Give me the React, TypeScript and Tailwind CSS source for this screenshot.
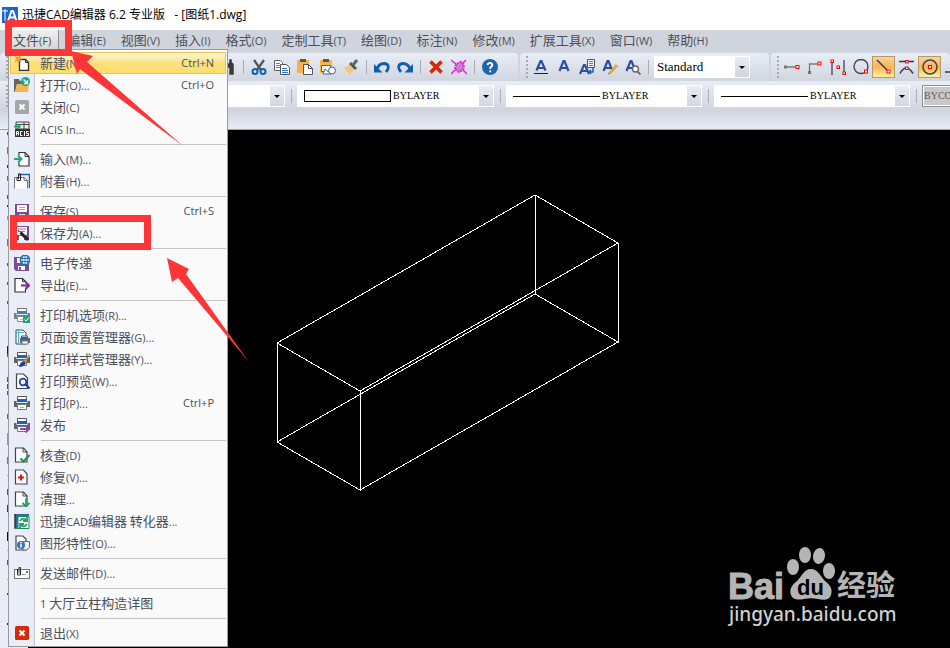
import React from "react";

type IconProps = { name: string };

function Printer() {
  return (
    <g>
      <path d="M3.5 1.5h9v4h-9z" fill="#fff" stroke="#555" />
      <rect x="3" y="4" width="10" height="3" fill="#1565c0" />
      <path d="M0 6h2.500v2h11V6H16v6h-3V9.500H3V12H0z" fill="#5f6368" />
      <path d="M3.500 9.500h9v5h-9z" fill="#fff" stroke="#777" />
      <path d="M6 12.500h4" stroke="#8ab4e8" />
    </g>
  );
}

function Icon({ name }: IconProps) {
  const shapes: Record<string, React.ReactNode> = {
    new: (
      <>
        <path d="M5.500 4.500h6l3 3v8h-9z" fill="#fff" stroke="#333" strokeWidth="1.300" />
        <path d="M11.500 4.500v3h3" fill="none" stroke="#333" />
        <path d="M4 0v8M0 4h8M1 1l6 6M7 1L1 7" stroke="#f0a030" strokeWidth="1.200" />
      </>
    ),
    open: (
      <>
        <path d="M0 2h5l1 2h4v3H3L1 15H0z" fill="#666" />
        <path d="M3 7h12l-1 8H1.500z" fill="#fbb34c" />
        <circle cx="11.500" cy="4.500" r="4.500" fill="#22a57c" />
        <path d="M9.500 2.500l4 4m0-3.500v3.500H10" fill="none" stroke="#fff" strokeWidth="1.300" />
      </>
    ),
    close: (
      <>
        <rect x="1" y="1" width="14" height="14" rx="1.500" fill="#a6a6a6" />
        <path d="M5.500 5.500l5 5m0-5l-5 5" stroke="#fff" strokeWidth="2" />
      </>
    ),
    acis: (
      <>
        <path d="M2 1h13v7H2zM10 1v7M2 3.500h13" fill="#eee" stroke="#444" />
        <path d="M0 5.500h5M3 3l3 2.500L3 8" fill="none" stroke="#22a06b" strokeWidth="1.500" />
        <rect x="1" y="8" width="15" height="8" fill="#333" />
        <path d="M2.500 14.500v-4h2v4m-2-2h2M8.500 10.500h-2v4h2M10.500 10v5M14.500 10.500h-2v2h2v2h-2.500" fill="none" stroke="#fff" />
      </>
    ),
    import: (
      <>
        <path d="M5 4V1.500h6l4 4v9.500H5v-3" fill="#fff" stroke="#333" strokeWidth="1.200" />
        <path d="M11 1.500v4h4" fill="none" stroke="#333" />
        <path d="M0 8h7M4 4.500L7.500 8 4 11.500" fill="none" stroke="#22a878" strokeWidth="2" />
      </>
    ),
    attach: (
      <>
        <path d="M4 1.500h11.500V15" fill="none" stroke="#1b6aa5" strokeWidth="1.500" />
        <path d="M.5 15.500v-11h10l3 3v8" fill="#fff" stroke="#777" />
        <path d="M10 4.500v3h4" fill="none" stroke="#777" />
        <path d="M3 4v3.500h3.500V1H4.500v5" fill="none" stroke="#222" />
      </>
    ),
    save: (
      <>
        <path d="M1 1h14v14H3l-2-2z" fill="#7b4b94" />
        <rect x="3" y="2" width="10" height="7" fill="#fff" />
        <path d="M5 4.500h6M5 6.500h6" stroke="#aaa" />
        <rect x="5" y="11" width="6" height="4" fill="#ddd" />
      </>
    ),
    saveas: (
      <>
        <path d="M1 1h14v14H3l-2-2z" fill="#7b4b94" />
        <rect x="3" y="2" width="10" height="8" fill="#fff" />
        <path d="M4 4h8" stroke="#c86464" />
        <path d="M4 6.500h7" stroke="#888" />
        <rect x="5" y="11" width="5" height="4" fill="#fff" />
        <path d="M6.500 7.500l7.500 7.500" stroke="#222" strokeWidth="3" />
        <path d="M4 5l2.500 2.500" stroke="#555" />
      </>
    ),
    send: (
      <>
        <path d="M0 2h15v14H2l-2-2z" fill="#7b4b94" />
        <rect x="3" y="3" width="8" height="5" fill="#fff" />
        <rect x="4" y="11" width="7" height="4" fill="#fff" />
        <rect x="5" y="12" width="2" height="3" fill="#7b4b94" />
        <circle cx="11" cy="5" r="4.800" fill="#e4f2ff" stroke="#1764a8" strokeWidth="1.200" />
        <path d="M6.500 3.500h9M6.500 6.500h9M11 0v10M9 .8q-2 4 0 8.500M13 .8q2 4 0 8.500" fill="none" stroke="#1764a8" strokeWidth=".8" />
      </>
    ),
    export: (
      <>
        <path d="M11.500 5V4.500l-3-3H1v13.500h10.500v-3" fill="#fff" stroke="#333" strokeWidth="1.200" />
        <path d="M8.500 1.500v3h3" fill="none" stroke="#333" />
        <path d="M7 8.500h8M11.500 5L15 8.500 11.500 12" fill="none" stroke="#7a28a8" strokeWidth="2" />
      </>
    ),
    printcheck: (
      <>
        <g opacity=".8"><Printer /></g>
        <rect x="9" y="9" width="7" height="7" fill="#2f9e6e" />
        <path d="M10.500 12.500l1.500 1.500 3-3.500" fill="none" stroke="#fff" />
      </>
    ),
    pagesetup: (
      <>
        <path d="M2 1h7l3 3v11H2z" fill="#fff" stroke="#444" />
        <path d="M4.500 1v14M2 3.500h8" stroke="#45b8dc" />
        <path d="M7.500 7h6v4h-6z" fill="#fff" stroke="#555" />
        <path d="M6 9h10v5H6z" fill="#5f6368" />
        <rect x="8" y="8" width="5" height="2" fill="#1565c0" />
        <rect x="8" y="12" width="6" height="3" fill="#fff" stroke="#777" />
      </>
    ),
    printstyle: (
      <>
        <Printer />
        <path d="M15.500 4L10 11" stroke="#d09022" strokeWidth="2" />
        <path d="M5 16q1-5 5-6l2 2q-2 4-7 4" fill="#173f93" />
      </>
    ),
    preview: (
      <>
        <path d="M2.500 1h7l4 4v10.500h-11z" fill="#fff" stroke="#444" strokeWidth="1.200" />
        <circle cx="9" cy="9" r="3.300" fill="#eef5ff" stroke="#1b3fa0" strokeWidth="1.700" />
        <path d="M11.500 11.500L15.500 15.500" stroke="#1b3fa0" strokeWidth="2" />
      </>
    ),
    print: <Printer />,
    publish: (
      <>
        <Printer />
        <path d="M6 12h9M11.500 8.500L15 12l-3.500 3.500" fill="none" stroke="#8b48ad" strokeWidth="2" />
      </>
    ),
    audit: (
      <>
        <path d="M1.500 1h8l3.500 4v10H1.500z" fill="#fff" stroke="#444" strokeWidth="1.200" />
        <path d="M9 1v4h4" fill="none" stroke="#444" />
        <path d="M6.500 11.500l3 3 6-6.500" fill="none" stroke="#119447" strokeWidth="2" />
      </>
    ),
    repair: (
      <>
        <path d="M1.500 1h8l3.500 4v10H1.500z" fill="#fff" stroke="#444" strokeWidth="1.200" />
        <path d="M7 5.500v6M4 8.500h6" stroke="#f20f0f" strokeWidth="2" />
      </>
    ),
    purge: (
      <>
        <path d="M1.500 1h8l3.500 4v10H1.500z" fill="#fff" stroke="#444" strokeWidth="1.200" />
        <path d="M9 1v4h4" fill="none" stroke="#444" />
        <path d="M12 7.500v8M8.500 12l3.500 3.500L15.500 12" fill="none" stroke="#2b9e68" strokeWidth="1.800" />
      </>
    ),
    convert: (
      <>
        <path d="M1 1h14v13H1z" fill="#2a6ca8" />
        <path d="M1 1v14h3" fill="none" stroke="#333" strokeWidth="1.500" />
        <path d="M4 3.500h11v12H4z" fill="#fff" stroke="#22885c" />
        <path d="M6 8q3-4 6-1m1-3v4H9M13 11q-3 4-6 1m-1 3v-4h4" fill="none" stroke="#18a566" strokeWidth="1.800" />
      </>
    ),
    props: (
      <>
        <path d="M2 1h7l3 3v11H2z" fill="#fff" stroke="#444" strokeWidth="1.200" />
        <path d="M9 6.500h6.500v6l-3 2.500H9z" fill="#eee" stroke="#666" />
        <circle cx="7" cy="10" r="4" fill="#3676ba" />
        <path d="M7 7v1.500M7 9v3.500" stroke="#fff" strokeWidth="1.500" />
      </>
    ),
    mail: (
      <>
        <rect x=".5" y="4.500" width="15" height="9" fill="#fff" stroke="#777" />
        <path d="M3.500 4v6h3V2.500H5v6" fill="none" stroke="#333" />
        <path d="M8 9.500h4" stroke="#999" />
        <rect x="12" y="6" width="2" height="2" fill="#3676ba" />
      </>
    ),
    exit: (
      <>
        <rect x="1" y="1" width="14" height="14" rx="1.500" fill="#d8280b" />
        <path d="M5.500 5.500l5 5m0-5l-5 5" stroke="#fff" strokeWidth="2" />
      </>
    ),
    find: (
      <path d="M4 1h2v3h3V0h3v3l2 2v11H9V9H7v6H1V7l3-3z" fill="#3a3a3a" stroke="#ddd" strokeWidth=".5" />
    ),
    cut: (
      <>
        <path d="M3 1l7 10M13 1L6 11" stroke="#555" strokeWidth="2.200" />
        <circle cx="4" cy="12.500" r="2.500" fill="none" stroke="#0f62ae" strokeWidth="2" />
        <circle cx="12" cy="12.500" r="2.500" fill="none" stroke="#0f62ae" strokeWidth="2" />
      </>
    ),
    copy: (
      <>
        <path d="M.5 1.500h6l2 2v8h-8z" fill="#fff" stroke="#666" />
        <path d="M2 4.500h4M2 6.500h5M2 8.500h4" stroke="#4c87c5" />
        <path d="M6.500 5.500h6l3 3v7h-9z" fill="#fff" stroke="#555" />
        <path d="M8 9.500h5M8 11.500h6M8 13.500h6" stroke="#2f78c4" />
      </>
    ),
    paste: (
      <>
        <path d="M0 1h12v13H0z" fill="#f9b24a" />
        <path d="M3 0h6v3H3z" fill="#555" />
        <path d="M6.500 5.500h5l4 4v6h-9z" fill="#fff" stroke="#555" />
        <path d="M11.500 5.500v4h4" fill="none" stroke="#555" />
      </>
    ),
    pastespecial: (
      <>
        <path d="M0 1h12v13H0z" fill="#f9b24a" />
        <path d="M3 0h6v3H3z" fill="#555" />
        <path d="M1.500 6.500h9v6h-9z" fill="#fff" stroke="#45658d" />
        <circle cx="12" cy="11.500" r="3.500" fill="#f4f4f4" stroke="#45658d" />
        <path d="M5 10l-2 5h8z" fill="#fff" stroke="#45658d" />
      </>
    ),
    brush: (
      <>
        <path d="M1 9l6-3 4 4-4 6z" fill="#efc581" />
        <path d="M6 5l6 6 2-2-6-6z" fill="#555" />
        <path d="M10 6l4-5" stroke="#666" strokeWidth="3" />
      </>
    ),
    undo: (
      <>
        <path d="M3 10Q5 4.500 10 4.500c4.500 0 6 4 2 8.500" fill="none" stroke="#0f5fb0" strokeWidth="2.800" />
        <path d="M0 5v8.500h8.500z" fill="#0f5fb0" />
      </>
    ),
    redo: (
      <>
        <path d="M13 10Q11 4.500 6 4.500c-4.500 0-6 4-2 8.500" fill="none" stroke="#0f5fb0" strokeWidth="2.800" />
        <path d="M16 5v8.500H7.500z" fill="#0f5fb0" />
      </>
    ),
    delete: <path d="M2.500 2.500l11 11m0-11l-11 11" stroke="#dc2400" strokeWidth="3.600" />,
    erase: (
      <>
        <path d="M0 1l5 4M15 1l-4 4M0 15l4-4M16 15l-4-4" stroke="#f01ae0" strokeWidth="1.500" />
        <path d="M4 10l1-5 5-2 3 3-1 5-4 2z" fill="#b58bbb" stroke="#f01ae0" strokeWidth="2" strokeDasharray="2 1" />
      </>
    ),
    help: (
      <>
        <circle cx="8" cy="8" r="8" fill="#1b67ab" />
        <path d="M5.500 6Q6 3.500 8.500 4q2.500.8 1.500 3L8.300 8.500v1.500M8.300 11.300v2" fill="none" stroke="#fff" strokeWidth="1.900" />
      </>
    ),
    textUnderline: (
      <>
        <path d="M3.500 11.500L7.500 2h1l4 9.500M5 9h6" fill="none" stroke="#2b509c" strokeWidth="2.200" />
        <path d="M1 14.500h14" stroke="#222" />
      </>
    ),
    text: <path d="M3.500 12L7.500 2h1l4 10M5 9h6" fill="none" stroke="#2b509c" strokeWidth="2.200" />,
    textImport: (
      <>
        <path d="M1 15L5 6h1l4 9M3 12h5" fill="none" stroke="#2b509c" strokeWidth="2.200" />
        <path d="M8.500.5h7v8h-7z" fill="#fff" stroke="#555" />
        <path d="M10 2.500h4M10 4.500h4M10 6.500h4" stroke="#777" />
        <path d="M14 8v5h-3m1-2l-2 2 2 2" fill="none" stroke="#1367b5" strokeWidth="1.500" />
      </>
    ),
    textEdit: (
      <>
        <path d="M1.500 12L5.500 2h1l4 10M3 9h6" fill="none" stroke="#2b509c" strokeWidth="2.200" />
        <path d="M15 6l-7 8" stroke="#e9a83f" strokeWidth="3" />
        <path d="M7 13l-1 2.500 2.500-1z" fill="#777" />
      </>
    ),
    textFind: (
      <>
        <path d="M1.500 12L5.500 2h1l4 10M3 9h6" fill="none" stroke="#2b509c" strokeWidth="2.200" />
        <circle cx="10.500" cy="10" r="3" fill="#fff" stroke="#666" strokeWidth="1.400" />
        <path d="M12.500 12.500l3 3" stroke="#666" strokeWidth="1.800" />
      </>
    ),
    snapTrack: (
      <>
        <path d="M2 8h11" stroke="#777" strokeWidth="1.300" />
        <rect x="0" y="6.500" width="3" height="3" fill="#777" />
        <rect x="12" y="6.500" width="3" height="3" fill="#fff" stroke="#f00" />
      </>
    ),
    snapFrom: (
      <>
        <path d="M2.500 14V5h9" fill="none" stroke="#777" strokeWidth="1.300" />
        <rect x="1" y="12" width="3" height="3" fill="#777" />
        <rect x="11" y="3" width="3" height="3" fill="#fff" stroke="#f00" />
      </>
    ),
    snapMid: (
      <>
        <path d="M2 3v13M14 1v13" stroke="#2a3b58" strokeWidth="1.200" />
        <g fill="#fff" stroke="#f00">
          <rect x="1" y="1" width="2.500" height="2.500" />
          <rect x="7" y="7" width="2.500" height="2.500" />
          <rect x="13" y="13" width="2.500" height="2.500" />
        </g>
      </>
    ),
    snapQuad: (
      <>
        <circle cx="8" cy="7.500" r="7" fill="none" stroke="#3c4454" strokeWidth="1.400" />
        <rect x="11.500" y="11" width="3" height="3" fill="#fff" stroke="#f00" />
      </>
    ),
    snapEnd: (
      <>
        <path d="M1 1l12 12" stroke="#2a3b58" strokeWidth="1.400" />
        <rect x="11" y="11" width="3" height="3" fill="#fff" stroke="#f00" />
      </>
    ),
    snapCross: (
      <>
        <path d="M0 2.500h15M1 14.500q6-11 13 0" fill="none" stroke="#2a3b58" strokeWidth="1.400" />
        <rect x="6.500" y="1.500" width="2.500" height="2.500" fill="#fff" stroke="#f00" />
        <rect x="6.500" y="8" width="2.500" height="2.500" fill="#fff" stroke="#f00" />
      </>
    ),
    snapCenter: (
      <>
        <circle cx="8" cy="8" r="7" fill="none" stroke="#3c4454" strokeWidth="1.600" />
        <rect x="6.500" y="6.500" width="3" height="3" fill="#fff" stroke="#f00" />
      </>
    ),
    snapPerp: <path d="M0 13h15M8 1v12" fill="none" stroke="#2a3b58" strokeWidth="1.400" />,
  };
  return (
    <svg viewBox="0 0 16 16" className="h-4 w-4 shrink-0" aria-hidden="true">
      {shapes[name]}
    </svg>
  );
}

/* Chinese runs at 13px, Latin runs at 11px */
function Mixed({ text }: { text: string }) {
  const runs = text.split(/([\x20-\x7e]+)/).filter(Boolean);
  return (
    <>
      {runs.map((run, i) =>
        /[\x20-\x7e]/.test(run) ? (
          <span key={i} className="text-[11px]">{run}</span>
        ) : (
          <span key={i}>{run}</span>
        )
      )}
    </>
  );
}

type Item = { icon?: string; label: string; keys?: string; active?: boolean };

const fileMenu: Item[][] = [
  [
    { icon: "new", label: "新建(N)...", keys: "Ctrl+N", active: true },
    { icon: "open", label: "打开(O)...", keys: "Ctrl+O" },
    { icon: "close", label: "关闭(C)" },
    { icon: "acis", label: "ACIS In..." },
  ],
  [
    { icon: "import", label: "输入(M)..." },
    { icon: "attach", label: "附着(H)..." },
  ],
  [
    { icon: "save", label: "保存(S)", keys: "Ctrl+S" },
    { icon: "saveas", label: "保存为(A)..." },
  ],
  [
    { icon: "send", label: "电子传递" },
    { icon: "export", label: "导出(E)..." },
  ],
  [
    { icon: "printcheck", label: "打印机选项(R)..." },
    { icon: "pagesetup", label: "页面设置管理器(G)..." },
    { icon: "printstyle", label: "打印样式管理器(Y)..." },
    { icon: "preview", label: "打印预览(W)..." },
    { icon: "print", label: "打印(P)...", keys: "Ctrl+P" },
    { icon: "publish", label: "发布" },
  ],
  [
    { icon: "audit", label: "核查(D)" },
    { icon: "repair", label: "修复(V)..." },
    { icon: "purge", label: "清理..." },
    { icon: "convert", label: "迅捷CAD编辑器 转化器..." },
    { icon: "props", label: "图形特性(O)..." },
  ],
  [{ icon: "mail", label: "发送邮件(D)..." }],
  [{ label: "1 大厅立柱构造详图" }],
  [{ icon: "exit", label: "退出(X)" }],
];

const menus = [
  "编辑(E)", "视图(V)", "插入(I)", "格式(O)", "定制工具(T)", "绘图(D)",
  "标注(N)", "修改(M)", "扩展工具(X)", "窗口(W)", "帮助(H)",
];

function FileMenu() {
  return (
    <div
      role="menu"
      className="absolute top-full left-0.5 z-20 -mt-px w-[220px] border border-[#9a9a9a] bg-[linear-gradient(to_right,#e9edf7_25px,#c4c6ca_25px,#c4c6ca_26px,#fafafa_26px)] px-px pt-0.5 pb-0.5"
    >
      {fileMenu.map((group, g) => (
        <div key={g}>
          {g > 0 && (
            <div className="flex h-2 items-center pl-[31px]">
              <div className="h-px w-full bg-[#c3c3c3]" />
            </div>
          )}
          {group.map((item) => (
            <button
              key={item.label}
              role="menuitem"
              className={
                "flex h-[22px] w-full items-center border pr-[11px] pl-[3px] text-left " +
                (item.active
                  ? "border-[#e8c552] bg-linear-to-b from-[#fdf6dc] via-[#fbe07c] to-[#ffdf6a]"
                  : "border-transparent")
              }
            >
              <span className="flex w-[26px] shrink-0">{item.icon && <Icon name={item.icon} />}</span>
              <span className="flex-1 whitespace-nowrap"><Mixed text={item.label} /></span>
              {item.keys && <span className="text-[11px]">{item.keys}</span>}
            </button>
          ))}
        </div>
      ))}
    </div>
  );
}

function Tool({ name, on }: { name: string; on?: boolean }) {
  return (
    <button
      aria-label={name}
      className={
        "flex h-[22px] w-[23px] shrink-0 items-center justify-center " +
        (on ? "border border-[#b39a6c] bg-linear-to-b from-[#fbd09a] via-[#fdb550] to-[#fff3a0]" : "")
      }
    >
      <Icon name={name} />
    </button>
  );
}

function Sep() {
  return (
    <div className="flex h-[14px] w-2 shrink-0 justify-center">
      <div className="h-full w-px bg-[#a5abb8]" />
    </div>
  );
}

function Grip() {
  return (
    <div className="flex h-[22px] w-[9px] shrink-0 flex-col justify-between pl-1.5">
      {[0, 1, 2, 3, 4, 5].map((n) => (
        <i key={n} className="block h-0.5 w-0.5 bg-[#a3a9b5]" />
      ))}
    </div>
  );
}

function Combo({ label, value, width, swatch }: { label: string; value: string; width: string; swatch?: "box" | "line" }) {
  return (
    <div className={"relative h-[22px] shrink-0 bg-white " + width}>
      <select
        aria-label={label}
        defaultValue={value}
        className={
          "block h-[22px] w-full appearance-none bg-transparent pr-4 font-['Liberation_Serif',serif] text-black outline-none " +
          (swatch ? "pl-24 text-[10px]" : "pl-[3px] text-[13px]")
        }
      >
        <option>{value}</option>
      </select>
      {swatch === "box" && <span className="absolute top-[5px] left-[7px] h-3 w-[87px] border border-black" />}
      {swatch === "line" && <span className="absolute top-[11px] left-[7px] h-px w-[87px] bg-black" />}
      <span className="pointer-events-none absolute top-px right-px flex h-5 w-3.5 items-center justify-center bg-linear-to-b from-[#e9edf5] to-[#d0d5df]">
        <i className="block border-x-[3px] border-t-[3px] border-x-transparent border-t-black" />
      </span>
    </div>
  );
}

function Bar({ children, className }: { children: React.ReactNode; className: string }) {
  return (
    <div className={"flex h-7 shrink-0 items-center rounded-t-sm bg-linear-to-b from-[#e9edf6] to-[#d0d5df] " + className}>
      {children}
    </div>
  );
}

/* Edges of the drawing tools that stick out beside the open menu */
const toolMarks: [number, number, string][] = [
  [2, 3, "#24508c"], [17, 7, "#778"], [35, 3, "#334"], [46, 5, "#668"], [65, 4, "#2862a8"],
  [75, 2, "#334"], [86, 4, "#999"], [109, 7, "#778"], [133, 3, "#2862a8"], [152, 3, "#2862a8"],
  [171, 3, "#2862a8"], [188, 1, "#aaa"], [216, 10, "#222"], [224, 3, "#2862a8"], [247, 5, "#555"],
  [254, 5, "#555"], [261, 4, "#555"], [284, 5, "#667"], [303, 12, "#89a"], [327, 7, "#778"],
  [345, 1, "#aaa"], [359, 6, "#556"], [375, 7, "#246"], [402, 9, "#111"], [420, 1, "#aaa"],
  [430, 5, "#2862a8"], [449, 1, "#aaa"], [463, 2, "#444"], [493, 2, "#222"],
];

function SideBar() {
  return (
    <aside className="w-7 shrink-0 bg-[#e9edf7]">
      <svg className="h-full w-full" aria-hidden="true">
        {toolMarks.map(([y, h, fill]) => (
          <rect key={y} x="7" y={y} width="1" height={h} fill={fill} />
        ))}
      </svg>
    </aside>
  );
}

function Watermark() {
  return (
    <svg className="absolute right-[46px] bottom-4 h-[90px] w-[180px]" aria-label="Baidu 经验">
      <g fill="#b5b5b5">
        <text x="4" y="57" stroke="#b5b5b5" className="font-['Liberation_Sans',sans-serif] text-[36px] font-bold">Bai</text>
        <ellipse cx="69" cy="25" rx="6" ry="8" />
        <ellipse cx="81" cy="13" rx="6" ry="8" />
        <ellipse cx="95" cy="14" rx="6" ry="8" transform="rotate(10 95 14)" />
        <ellipse cx="105" cy="29" rx="6" ry="8" />
        <path d="M87 27c7 0 9 7 14 12 5 4 8 8 6 14-2 6-8 5-13 4-5-1-9-1-14 0-6 1-11 1-13-4-2-6 1-10 6-14 5-5 7-12 14-12z" />
        <text x="113" y="54" className="font-['Noto_Sans_CJK_SC',sans-serif] text-[29px] font-bold">经验</text>
      </g>
      <text x="73" y="53" fill="#000" className="font-['Liberation_Sans',sans-serif] text-[22px] font-bold">du</text>
      <text x="5" y="79" fill="#d0d0d0" className="font-['Noto_Sans',sans-serif] text-[19px] font-medium">jingyan.baidu.com</text>
    </svg>
  );
}

function Canvas() {
  return (
    <main className="relative min-w-0 flex-1 bg-black">
      <svg className="absolute inset-0 h-full w-full" aria-label="长方体线框">
        <path
          d="M507 65L590 113V212L507 164zM249 213L332 261V360L249 312zM249 213L507 65M332 261L590 113M332 360L590 212M249 312L507 164"
          fill="none"
          stroke="#fff"
          shapeRendering="crispEdges"
        />
      </svg>
      <Watermark />
    </main>
  );
}

/* Callouts drawn on top of the window */
function Callouts() {
  return (
    <div className="pointer-events-none absolute inset-0 z-30">
      <div className="absolute top-5 left-[5px] h-9 w-[67px] border-[7px] border-[#fc3636]" />
      <div className="absolute top-[215px] left-2.5 h-[35px] w-[141px] border-[7px] border-[#fc3636]" />
      <svg className="absolute inset-0 h-full w-full" aria-hidden="true">
        <path d="M71 51L93 56 87 62 183 146 80 69 77 74z" fill="#fc3636" />
        <path d="M167 258L189 269 186 274 249 362 178 278 172 282z" fill="#fc3636" />
      </svg>
    </div>
  );
}

export default function App() {
  return (
    <div className="relative flex h-screen flex-col overflow-hidden bg-[#d0d4dd] font-['Open_Sans','Noto_Sans_CJK_SC',sans-serif] text-[13px] leading-5 text-[#4b4f5a]">
      <header className="flex h-[30px] shrink-0 items-center gap-1 bg-white pl-0.5 text-xs text-black">
        <svg viewBox="0 0 16 16" className="h-4 w-4" aria-hidden="true">
          <path d="M0 0h16v16H0z" fill="#1665d8" />
          <path d="M3 2v12M0 4h6" stroke="#fff" />
          <path d="M6 14l3.500-10h1.500l3.500 10M7.500 10.500h5" fill="none" stroke="#fff" strokeWidth="2" />
        </svg>
        <h1 className="whitespace-pre">迅捷CAD编辑器 6.2 专业版   - [图纸1.dwg]</h1>
      </header>

      <nav className="flex h-[23px] shrink-0 items-start gap-px bg-[#d0d4dd] pl-1.5 whitespace-nowrap">
        <div className="relative">
          <button className="relative h-5 border-r border-[#8f8f8f] bg-linear-to-b from-[#efefef] to-[#d6d6d6] px-[7px]">
            <Mixed text="文件(F)" />
          </button>
          <FileMenu />
        </div>
        {menus.map((m) => (
          <button key={m} className="h-5 px-[7px]"><Mixed text={m} /></button>
        ))}
      </nav>

      <div className="flex shrink-0 gap-0.5 overflow-hidden">
        <Bar className="w-[518px]">
          <Grip />
          <div className="w-[207px] shrink-0" />
          <Tool name="find" />
          <Sep />
          <Tool name="cut" />
          <Tool name="copy" />
          <Tool name="paste" />
          <Tool name="pastespecial" />
          <Tool name="brush" />
          <Sep />
          <Tool name="undo" />
          <Tool name="redo" />
          <Sep />
          <Tool name="delete" />
          <Tool name="erase" />
          <Sep />
          <Tool name="help" />
        </Bar>
        <Bar className="w-[249px]">
          <Grip />
          <Tool name="textUnderline" />
          <Tool name="text" />
          <Tool name="textImport" />
          <Tool name="textEdit" />
          <Tool name="textFind" />
          <Sep />
          <div className="w-0.5" />
          <Combo label="文字样式" value="Standard" width="w-24" />
        </Bar>
        <Bar className="flex-1 overflow-hidden">
          <Grip />
          <Tool name="snapTrack" />
          <Tool name="snapFrom" />
          <Tool name="snapMid" />
          <Tool name="snapQuad" />
          <Tool name="snapEnd" on />
          <Tool name="snapCross" />
          <Tool name="snapCenter" on />
          <Tool name="snapPerp" />
        </Bar>
      </div>

      <div className="flex h-7 shrink-0 items-center gap-0.5 overflow-hidden bg-linear-to-b from-[#e9edf6] to-[#d0d5df] pt-0.5">
        <Grip />
        <div className="w-20 shrink-0" />
        <Combo label="图层" value="" width="w-[192px]" />
        <Sep />
        <Combo label="颜色" value="BYLAYER" width="w-[197px]" swatch="box" />
        <Sep />
        <Combo label="线型" value="BYLAYER" width="w-[196px]" swatch="line" />
        <Sep />
        <Combo label="线宽" value="BYLAYER" width="w-[196px]" swatch="line" />
        <Sep />
        <select
          disabled
          aria-label="打印样式"
          className="h-[22px] w-32 shrink-0 appearance-none border border-[#8f8f8f] bg-[#c8c8c8] pl-px font-['Liberation_Serif',serif] text-[10px] text-[#5d5d5d] opacity-100 outline-1 -outline-offset-2 outline-white"
        >
          <option>BYCOLOR</option>
        </select>
      </div>

      <div className="h-[21px] shrink-0 border-b border-[#9aa0ad] bg-linear-to-b from-[#ced3dd] to-[#e8ecf5]" />
      <div className="flex min-h-0 flex-1">
        <SideBar />
        <Canvas />
      </div>
      <Callouts />
    </div>
  );
}
